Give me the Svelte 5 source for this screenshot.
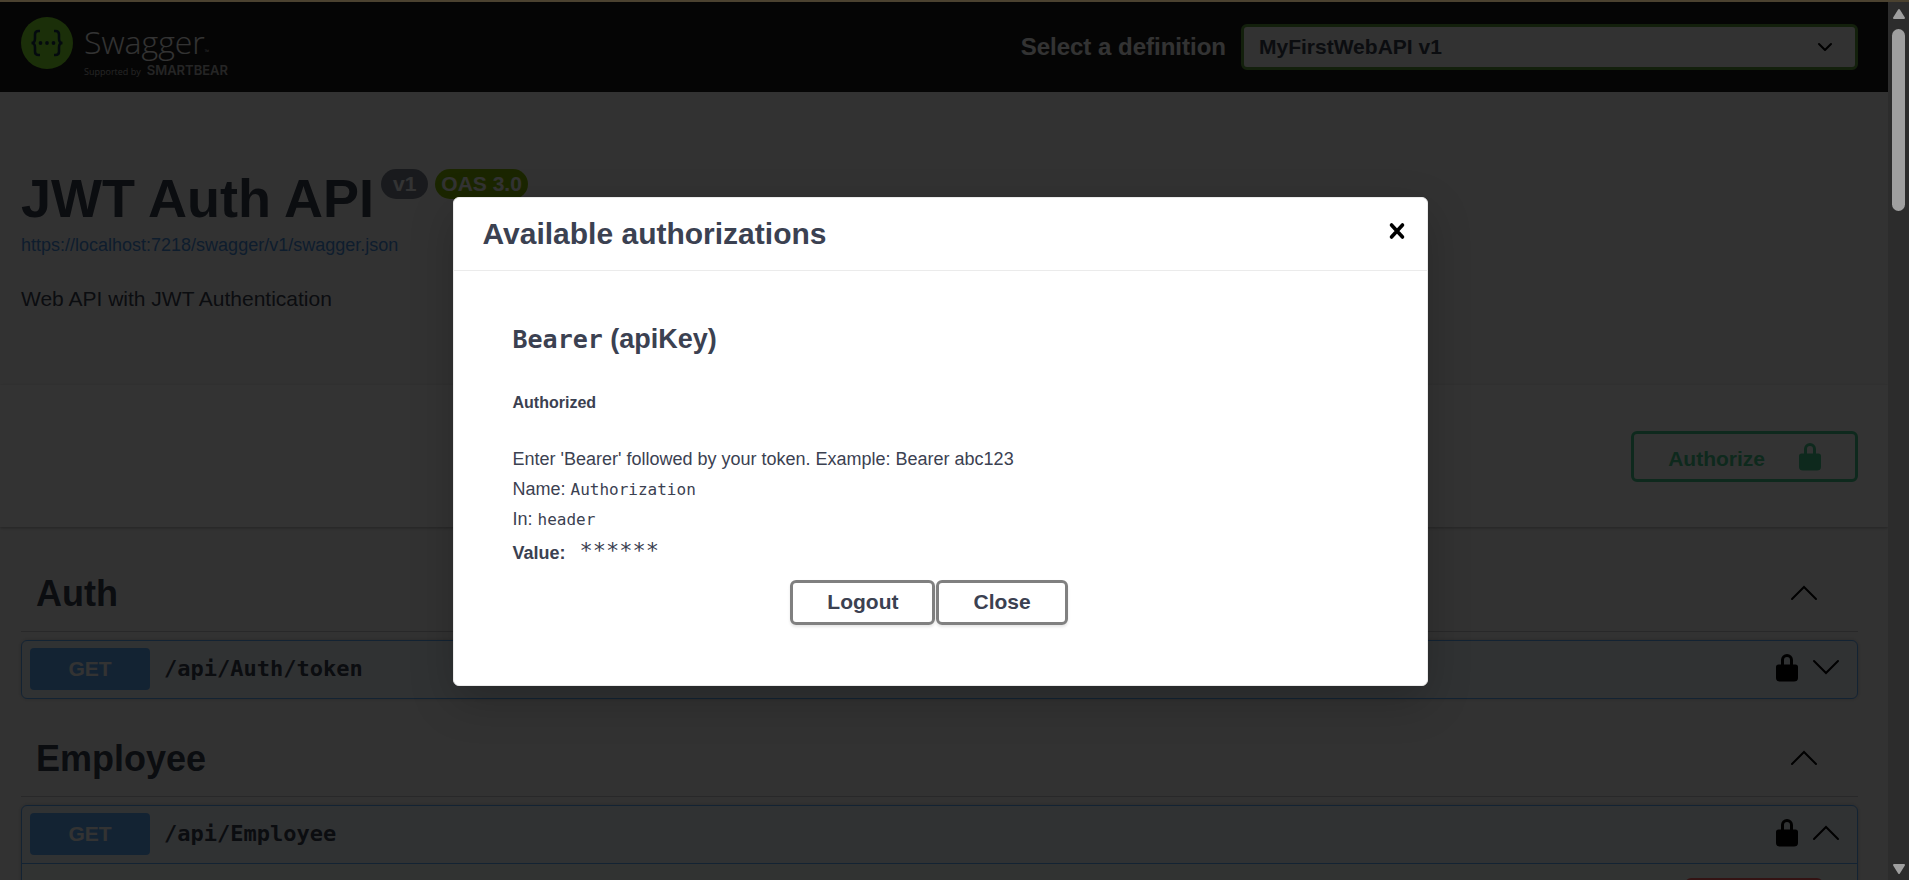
<script>
  const groups = [
    { name: 'Auth', path: '/api/Auth/token', expanded: false },
    { name: 'Employee', path: '/api/Employee', expanded: true }
  ];
  const definitions = ['MyFirstWebAPI v1'];
</script>

{#snippet lock()}
  <svg class="lock" viewBox="0 2 30 30" width="30" height="30" aria-hidden="true">
    <path fill="currentColor" fill-rule="evenodd" d="M9 12.500V8a6 6 0 0 1 12 0v4.500h2.500a2.500 2.500 0 0 1 2.500 2.500V26c0 2.500-1.500 3.500-4 3.500H8c-2.500 0-4-1-4-3.500V15a2.500 2.500 0 0 1 2.500-2.500zM12 12.500h6V8a3 3 0 0 0-6 0z" />
  </svg>
{/snippet}

{#snippet chevron(up)}
  <svg viewBox="0 0 30 30" width="30" height="30" aria-hidden="true">
    <path fill="none" stroke="#000" stroke-width="2" stroke-linecap="round" d={up ? 'M3 20 15 8l12 12' : 'M3 7l12 12L27 7'} />
  </svg>
{/snippet}

<div class="window">
  <div class="edge"></div>
  <div class="view">
    <div class="page">
      <header class="topbar">
        <a class="brand" href="#top" aria-label="Swagger">
          <svg viewBox="0 0 52 52" width="52" height="52" aria-hidden="true">
            <circle cx="26" cy="26" r="26" fill="#85ea2d" />
            <g fill="none" stroke="#173647" stroke-width="2.600">
              <path d="M19 14h-1.500c-2.500 0-3.500 1.200-3.500 3.500v4c0 2.500-1 4.500-3.500 4.500 2.500 0 3.500 2 3.500 4.500v4c0 2.300 1 3.500 3.500 3.500H19" />
              <path d="M33 14h1.500c2.500 0 3.500 1.200 3.500 3.500v4c0 2.500 1 4.500 3.500 4.500-2.500 0-3.500 2-3.500 4.500v4c0 2.300-1 3.500-3.500 3.500H33" />
            </g>
            <g fill="#173647">
              <circle cx="19.500" cy="26" r="1.900" />
              <circle cx="26" cy="26" r="1.900" />
              <circle cx="32.500" cy="26" r="1.900" />
            </g>
          </svg>
          <span class="wordmark">
            <span class="name">Swagger<small>™</small></span>
            <span class="support">Supported by <b>SMARTBEAR</b></span>
          </span>
        </a>
        <div class="picker">
          <label for="definition">Select a definition</label>
          <div class="select">
            <select id="definition">
              {#each definitions as d}<option>{d}</option>{/each}
            </select>
            <svg viewBox="0 0 16 16" width="16" height="16" aria-hidden="true">
              <path fill="none" stroke="#000" stroke-width="2" stroke-linecap="round" stroke-linejoin="round" d="M2 5l6 6 6-6" />
            </svg>
          </div>
        </div>
      </header>

      <section class="info">
        <div class="title">
          <h1>JWT Auth API</h1>
          <span class="pill">v1</span>
          <span class="pill oas">OAS 3.0</span>
        </div>
        <a class="spec" href="#spec">https://localhost:7218/swagger/v1/swagger.json</a>
        <p>Web API with JWT Authentication</p>
      </section>

      <section class="scheme">
        <button class="authorize" type="button"><span>Authorize</span>{@render lock()}</button>
      </section>

      <main>
        {#each groups as g}
          <section class="group">
            <div class="tag">
              <h2>{g.name}</h2>
              {@render chevron(true)}
            </div>
            <div class="op">
              <div class="summary">
                <span class="method">GET</span>
                <span class="path">{g.path}</span>
                {@render lock()}
                {@render chevron(g.expanded)}
              </div>
              {#if g.expanded}
                <div class="details">
                  <div class="action"></div>
                </div>
              {/if}
            </div>
          </section>
        {/each}
      </main>
    </div>

    <div class="backdrop">
      <div class="modal" role="dialog" aria-modal="true" aria-labelledby="auth-title">
        <div class="modal-head">
          <h3 id="auth-title">Available authorizations</h3>
          <button class="dismiss" type="button" aria-label="Dismiss">
            <svg viewBox="0 0 18 30" width="18" height="30" aria-hidden="true">
              <path fill="none" stroke="#000" stroke-width="3.600" stroke-linecap="round" d="M3.500 9l11 12M14.500 9l-11 12" />
            </svg>
          </button>
        </div>
        <div class="modal-body">
          <h4><code>Bearer</code> (apiKey)</h4>
          <h6>Authorized</h6>
          <p>Enter 'Bearer' followed by your token. Example: Bearer abc123</p>
          <p>Name: <code>Authorization</code></p>
          <p>In: <code>header</code></p>
          <div class="value"><b>Value:</b><code>******</code></div>
          <div class="buttons">
            <button type="button">Logout</button>
            <button type="button">Close</button>
          </div>
        </div>
      </div>
    </div>

    <div class="scrollbar" aria-hidden="true">
      <svg viewBox="0 0 14 12" width="14" height="12"><path fill="#9f9f9f" stroke="#9f9f9f" stroke-width="2" stroke-linejoin="round" d="M7 2l5 8H2z" /></svg>
      <div class="track"><div class="thumb"></div></div>
      <svg viewBox="0 0 14 12" width="14" height="12"><path fill="#9f9f9f" stroke="#9f9f9f" stroke-width="2" stroke-linejoin="round" d="M7 10L2 2h10z" /></svg>
    </div>
  </div>
</div>

<style>
  :global(body) {
    margin: 0;
    background: #323232;
  }

  .window {
    display: flex;
    flex-direction: column;
    height: 100vh;
    overflow: hidden;
    font-family: 'Liberation Sans', Arial, sans-serif;
    color: #3b4151;
  }

  h1, h2, h3, h4, h6, p {
    margin: 0;
  }

  button, select {
    font: bold 21px/24px 'Liberation Sans', Arial, sans-serif;
    color: #3b4151;
  }

  code, .path {
    font-family: 'DejaVu Sans Mono', monospace;
    line-height: 1;
  }

  svg {
    display: block;
    flex: none;
  }

  .edge {
    flex: none;
    height: 2px;
    background: #4b4230;
  }

  .view {
    flex: 1;
    min-height: 0;
    display: grid;
    grid-template-columns: minmax(0, 1fr) 21px;
    grid-template-rows: minmax(0, 1fr);
  }

  .page, .backdrop {
    grid-area: 1 / 1;
  }

  .page {
    overflow: hidden;
    background: #fafafa;
  }

  .topbar {
    display: flex;
    align-items: center;
    justify-content: space-between;
    height: 90px;
    box-sizing: border-box;
    padding: 0 30px 0 21px;
    background: #1b1b1b;
  }

  .brand {
    display: flex;
    gap: 11px;
    height: 60px;
    color: #fff;
    text-decoration: none;
    font-family: 'Open Sans', sans-serif;
  }

  .wordmark {
    display: flex;
    flex-direction: column;
  }

  .name {
    font-size: 32px;
    font-weight: 300;
    line-height: 50px;
  }

  .name small {
    font-size: 6px;
    line-height: 1;
  }

  .support {
    display: flex;
    align-items: baseline;
    gap: 6px;
    margin-top: -3px;
    font-size: 9px;
    line-height: 12px;
    color: #b8b8b8;
  }

  .support b {
    font: 600 13px/12px Inter, sans-serif;
  }

  .picker {
    display: flex;
    align-items: center;
    gap: 15px;
  }

  .picker label {
    font-size: 24px;
    font-weight: bold;
    white-space: nowrap;
    color: #fff;
  }

  .select {
    display: grid;
    align-items: center;
    width: 617px;
  }

  .select select {
    grid-area: 1 / 1;
    appearance: none;
    height: 46px;
    padding: 0 15px;
    border: 3px solid #62a03f;
    border-radius: 6px;
    background: #f7f7f7;
  }

  .select svg {
    grid-area: 1 / 1;
    justify-self: end;
    margin-right: 25px;
    pointer-events: none;
  }

  .info {
    padding: 75px 30px 74px 21px;
  }

  .title {
    display: flex;
    align-items: flex-start;
    gap: 7px;
  }

  h1 {
    font-size: 54px;
    line-height: 62px;
  }

  .pill {
    margin-top: 2px;
    padding: 0 12px;
    border-radius: 15px;
    background: #7d8492;
    color: #fff;
    font-size: 21px;
    font-weight: bold;
    line-height: 30px;
  }

  .oas {
    padding: 0 6px;
    background: #89bf04;
  }

  .spec {
    display: block;
    margin-top: 6px;
    font-size: 18px;
    line-height: 20px;
    color: #4990e2;
    text-decoration: none;
  }

  .info p {
    margin-top: 32px;
    font-size: 21px;
    line-height: 24px;
  }

  .scheme {
    display: flex;
    justify-content: flex-end;
    padding: 46px 30px 45px;
    background: #fff;
    box-shadow: 0 1px 3px rgba(0, 0, 0, 0.3);
  }

  .authorize {
    display: flex;
    align-items: center;
    gap: 30px;
    height: 51px;
    padding: 2px 30px 0 34px;
    border: 3px solid #49cc90;
    border-radius: 6px;
    background: transparent;
    color: #49cc90;
  }

  .authorize span {
    padding-top: 2px;
  }

  main {
    padding: 30px 30px 0 21px;
  }

  .group {
    padding-bottom: 23px;
  }

  .tag {
    display: flex;
    align-items: center;
    justify-content: space-between;
    padding: 15px 39px 15px 15px;
    border-bottom: 1px solid #c5c6ca;
  }

  h2 {
    font-size: 36px;
    line-height: 44px;
  }

  .op {
    margin-top: 8px;
    border: 1px solid #61affe;
    border-radius: 6px;
    background: #eff7ff;
    box-shadow: 0 0 4px rgba(0, 0, 0, 0.19);
  }

  .summary {
    display: flex;
    align-items: center;
    gap: 9px;
    padding: 7px 16px 8px 8px;
    color: #000;
  }

  .method {
    width: 120px;
    border-radius: 4px;
    background: #61affe;
    color: #fff;
    font-size: 21px;
    font-weight: bold;
    line-height: 42px;
    text-align: center;
  }

  .path {
    flex: 1;
    padding-left: 5px;
    color: #3b4151;
    font-size: 22px;
    font-weight: bold;
  }

  .details {
    padding: 14px 34px 0;
    border-top: 1px solid #61affe;
    background: #f5fffa;
  }

  .action {
    height: 50px;
    width: 132px;
    margin-left: auto;
    border: 3px solid #ff6060;
    border-radius: 6px;
  }

  .backdrop {
    z-index: 1;
    display: flex;
    align-items: center;
    justify-content: center;
    padding-right: 8px;
    background: rgba(0, 0, 0, 0.8);
  }

  .modal {
    width: 975px;
    box-sizing: border-box;
    border: 1px solid #ebebeb;
    border-radius: 6px;
    background: #fff;
    box-shadow: 0 15px 45px rgba(0, 0, 0, 0.2);
  }

  .modal-head {
    display: flex;
    align-items: flex-start;
    justify-content: space-between;
    padding: 18px 21px 18px 29px;
    border-bottom: 1px solid #ebebeb;
  }

  h3 {
    font-size: 30px;
    line-height: 36px;
  }

  .dismiss {
    padding: 0;
    border: 0;
    background: none;
  }

  .modal-body {
    padding: 50px 59px 60px;
    font-size: 18px;
    line-height: 30px;
  }

  h4 {
    font-size: 27px;
    line-height: 36px;
  }

  h4 code {
    font-size: 25px;
  }

  h6 {
    margin: 34px 0 29px;
    font-size: 16px;
    line-height: 24px;
  }

  p code {
    font-size: 16px;
  }

  .value {
    display: flex;
    gap: 14px;
    margin-top: 4px;
  }

  .value code {
    padding-top: 2px;
    font-size: 22px;
  }

  .buttons {
    display: flex;
    justify-content: center;
    gap: 1px;
    margin-top: 12px;
    padding-right: 22px;
  }

  .buttons button {
    height: 45px;
    padding: 0 34px;
    border: 3px solid #808080;
    border-radius: 6px;
    background: transparent;
    box-shadow: 0 2px 3px rgba(0, 0, 0, 0.1);
  }

  .scrollbar {
    display: flex;
    flex-direction: column;
    align-items: center;
    padding: 6px 0 5px;
    background: #2c2c2c;
  }

  .track {
    flex: 1;
    padding: 9px 0;
  }

  .thumb {
    width: 13px;
    height: 22%;
    border-radius: 7px;
    background: #9f9f9f;
  }
</style>
